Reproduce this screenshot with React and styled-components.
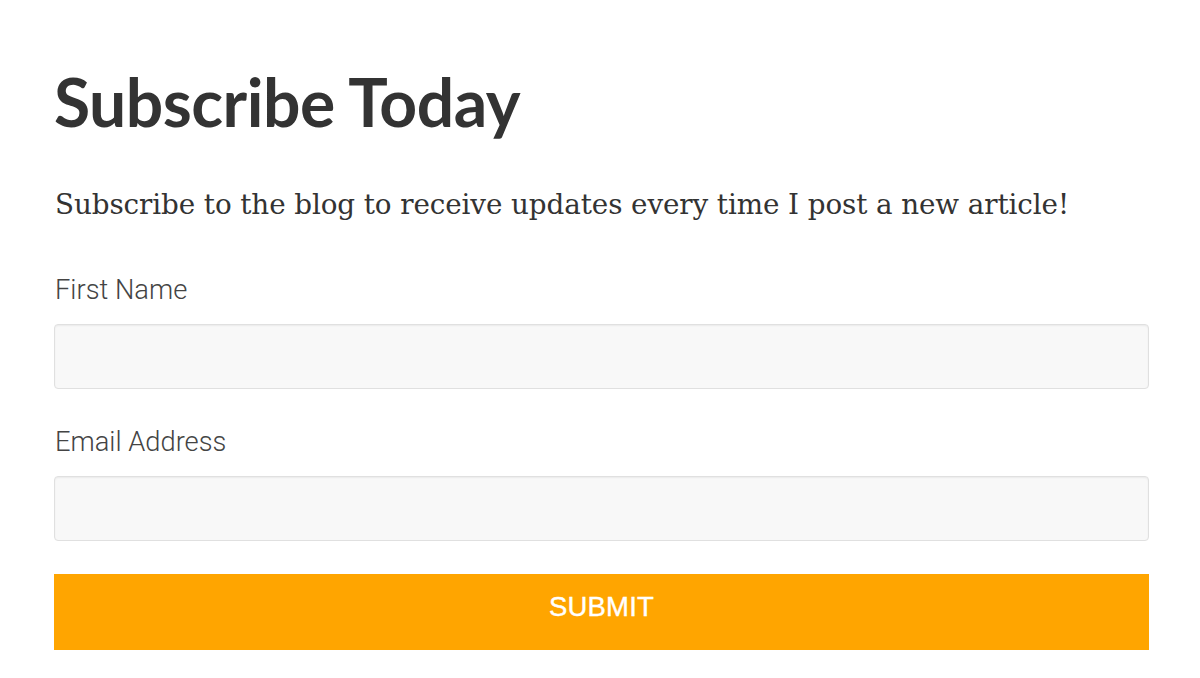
import React from "react";
import styled, { createGlobalStyle } from "styled-components";

const Global = createGlobalStyle`
  body {
    margin: 0;
    background: #fff;
  }
`;

const Page = styled.div`
  padding: 62px 51px 0 54px;
  display: flex;
  flex-direction: column;
`;

const Title = styled.h1`
  margin: 0;
  font-family: Lato, sans-serif;
  font-weight: 700;
  font-size: 66px;
  line-height: 80px;
  color: #333;
  letter-spacing: -0.5px;
`;

const Desc = styled.p`
  margin: 43px 0 0 1px;
  font-family: "DejaVu Serif", "Liberation Serif", serif;
  font-size: 27.8px;
  line-height: 40px;
  color: #333;
  letter-spacing: -0.1px;
`;

const Form = styled.form`
  margin-top: 45px;
  display: flex;
  flex-direction: column;
`;

const Label = styled.label`
  font-family: Roboto, sans-serif;
  font-weight: 300;
  font-size: 27.3px;
  line-height: 40px;
  color: #444;
  margin-bottom: 14px;
  padding-left: 1px;
`;

const Input = styled.input`
  box-sizing: border-box;
  width: 100%;
  height: 65px;
  border: 1px solid #e0e0e0;
  border-radius: 4px;
  background: #f8f8f8;
  box-shadow: inset 0 1px 2px rgba(0, 0, 0, 0.06);
  margin-bottom: 33px;
`;

const Button = styled.button`
  box-sizing: border-box;
  height: 76px;
  padding: 0 0 10px;
  border: none;
  background: #ffa500;
  color: #fff;
  font-family: "Liberation Sans", Arial, sans-serif;
  font-size: 27.5px;
  letter-spacing: 0.2px;
  -webkit-text-stroke: 0.4px #fff;
`;

export default function App() {
  return (
    <Page>
      <Global />
      <Title>Subscribe Today</Title>
      <Desc>Subscribe to the blog to receive updates every time I post a new article!</Desc>
      <Form onSubmit={(e) => e.preventDefault()}>
        <Label>First Name</Label>
        <Input type="text" />
        <Label>Email Address</Label>
        <Input type="email" />
        <Button type="submit">SUBMIT</Button>
      </Form>
    </Page>
  );
}
